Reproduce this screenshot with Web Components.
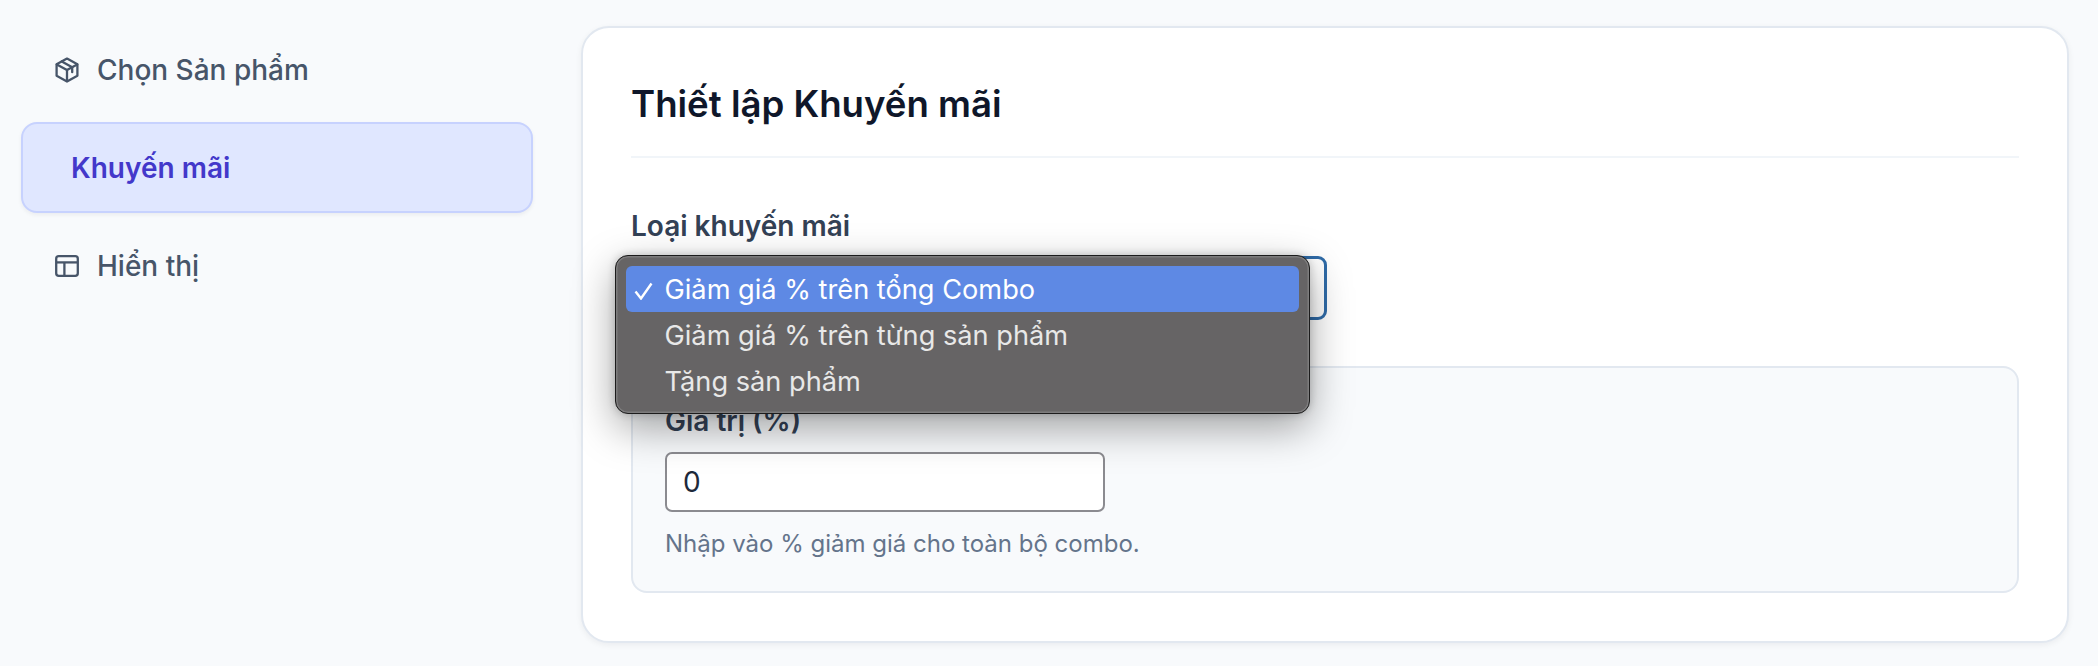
<!DOCTYPE html>
<html lang="vi">
<head>
<meta charset="utf-8">
<title>Thiết lập Khuyến mãi</title>
<style>
  html, body { margin: 0; height: 100%; overflow: hidden; background: #f8fafc; font-family: Inter, "Noto Sans", sans-serif; }
</style>
</head>
<body>
<combo-editor>
  <side-nav slot="nav">
    <nav-item icon="package">Chọn Sản phẩm</nav-item>
    <nav-item active>Khuyến mãi</nav-item>
    <nav-item icon="layout">Hiển thị</nav-item>
  </side-nav>
  <promo-card heading="Thiết lập Khuyến mãi">
    <promo-type label="Loại khuyến mãi"></promo-type>
    <value-panel label="Giá trị (%)" value="0" hint="Nhập vào % giảm giá cho toàn bộ combo."></value-panel>
  </promo-card>
</combo-editor>

<script>
class ComboEditor extends HTMLElement {
    constructor() {
        super();
        this.attachShadow({ mode: 'open' });
        this.shadowRoot.innerHTML = `
            <style>
                :host {
                    display: grid;
                    grid-template-columns: 512px 1488px;
                    column-gap: 48px;
                    padding: 0 29px 0 21px;
                    align-items: start;
                }
            </style>
            <slot name="nav"></slot>
            <slot></slot>
        `;
    }
}

class SideNav extends HTMLElement {
    constructor() {
        super();
        this.attachShadow({ mode: 'open' });
        this.shadowRoot.innerHTML = `
            <style>
                :host {
                    display: flex;
                    flex-direction: column;
                    gap: 7px;
                    padding-top: 24px;
                }
            </style>
            <slot></slot>
        `;
    }
}

const NAV_ICONS = {
    package: `<svg width="24" height="26" viewBox="0 0 24 26" fill="none" stroke="currentColor" stroke-width="2.3" stroke-linejoin="round" stroke-linecap="round">
        <path d="M12 1.6 22.4 7.3v11.4L12 24.4 1.6 18.7V7.3Z"/>
        <path d="M1.8 7.4 12 13l10.2-5.6"/>
        <path d="M12 13v11.2"/>
        <path d="M6.8 4.4 17.2 10.2v5"/>
    </svg>`,
    layout: `<svg width="24" height="22" viewBox="0 0 24 22" fill="none" stroke="currentColor" stroke-width="2.3" stroke-linejoin="round">
        <rect x="1.2" y="1.2" width="21.6" height="19.6" rx="2.6"/>
        <path d="M1.2 7.4h21.6"/>
        <path d="M9.4 7.4v13.4"/>
    </svg>`
};

class NavItem extends HTMLElement {
    constructor() {
        super();
        this.attachShadow({ mode: 'open' });
    }

    connectedCallback() {
        const icon = NAV_ICONS[this.getAttribute('icon')] || '';
        this.shadowRoot.innerHTML = `
            <style>
                :host {
                    display: flex;
                    align-items: center;
                    gap: 18px;
                    box-sizing: border-box;
                    height: 91px;
                    padding: 0 32px;
                    border: 2px solid transparent;
                    border-radius: 16px;
                    color: #475569;
                    font-size: 28px;
                    font-weight: 500;
                }
                :host([active]) {
                    padding-left: 48px;
                    background: #e0e7ff;
                    border-color: #c7d2fe;
                    color: #4338ca;
                    font-weight: 600;
                    box-shadow: 0 2px 4px rgba(15, 23, 42, 0.06);
                }
                svg { display: block; flex: none; }
            </style>
            ${icon}
            <slot></slot>
        `;
    }
}

class PromoCard extends HTMLElement {
    constructor() {
        super();
        this.attachShadow({ mode: 'open' });
    }

    connectedCallback() {
        this.shadowRoot.innerHTML = `
            <style>
                :host {
                    display: block;
                    box-sizing: border-box;
                    height: 617px;
                    margin-top: 26px;
                    padding: 55px 48px 0;
                    background: #fff;
                    border: 2px solid #e2e8f0;
                    border-radius: 28px;
                    box-shadow: 0 2px 6px rgba(15, 23, 42, 0.06);
                }
                h2 {
                    margin: 0;
                    padding-bottom: 31px;
                    border-bottom: 2px solid #f1f5f9;
                    color: #0f172a;
                    font-size: 36.6px;
                    line-height: 42px;
                    font-weight: 600;
                }
            </style>
            <h2>${this.getAttribute('heading')}</h2>
            <slot></slot>
        `;
    }
}

class PromoType extends HTMLElement {
    constructor() {
        super();
        this.attachShadow({ mode: 'open' });
    }

    connectedCallback() {
        this.shadowRoot.innerHTML = `
            <style>
                :host { display: block; margin-top: 51px; }
                label {
                    display: block;
                    margin-bottom: 13px;
                    color: #334155;
                    font-size: 28px;
                    line-height: 34px;
                    font-weight: 600;
                }
                .select {
                    position: relative;
                    box-sizing: border-box;
                    width: 696px;
                    height: 64px;
                    background: #fff;
                    border: 3.5px solid #2f6ba8;
                    border-radius: 9px;
                }
                option-menu {
                    position: absolute;
                    left: -19.5px;
                    top: -4.5px;
                }
            </style>
            <label>${this.getAttribute('label')}</label>
            <div class="select">
                <option-menu>
                    <menu-option selected>Giảm giá % trên tổng Combo</menu-option>
                    <menu-option>Giảm giá % trên từng sản phẩm</menu-option>
                    <menu-option>Tặng sản phẩm</menu-option>
                </option-menu>
            </div>
        `;
    }
}

class OptionMenu extends HTMLElement {
    constructor() {
        super();
        this.attachShadow({ mode: 'open' });
        this.shadowRoot.innerHTML = `
            <style>
                :host {
                    display: block;
                    box-sizing: border-box;
                    width: 695px;
                    height: 159px;
                    padding: 10px;
                    background: #666465;
                    border: 1px solid #1c1c1c;
                    border-radius: 13px;
                    box-shadow: inset 0 0 0 1.5px #7d7c7d, 0 14px 42px rgba(0, 0, 0, 0.36), 0 0 8px rgba(0, 0, 0, 0.2);
                }
            </style>
            <slot></slot>
        `;
    }
}

class MenuOption extends HTMLElement {
    constructor() {
        super();
        this.attachShadow({ mode: 'open' });
    }

    connectedCallback() {
        const tick = this.hasAttribute('selected')
            ? `<svg class="tick" width="20" height="18" viewBox="0 0 20 18" fill="none" stroke="currentColor" stroke-width="2.4"><path d="M1.5 9.5 7 16.5 17.5 1.5"/></svg>`
            : '';
        this.shadowRoot.innerHTML = `
            <style>
                :host {
                    display: flex;
                    align-items: center;
                    position: relative;
                    box-sizing: border-box;
                    height: 46px;
                    padding: 2px 0 0 39px;
                    border-radius: 6px;
                    color: #e8e8e8;
                    font-size: 27.2px;
                    font-weight: 400;
                    white-space: nowrap;
                }
                :host([selected]) {
                    background: #5e89e4;
                    color: #fff;
                }
                .tick { position: absolute; left: 8px; top: 16px; }
            </style>
            ${tick}
            <slot></slot>
        `;
    }
}

class ValuePanel extends HTMLElement {
    constructor() {
        super();
        this.attachShadow({ mode: 'open' });
    }

    connectedCallback() {
        this.shadowRoot.innerHTML = `
            <style>
                :host {
                    display: block;
                    box-sizing: border-box;
                    height: 227px;
                    margin-top: 46px;
                    padding: 36px 32px 0;
                    background: #f8fafc;
                    border: 2px solid #e2e8f0;
                    border-radius: 16px;
                }
                label {
                    display: block;
                    margin-bottom: 14px;
                    color: #334155;
                    font-size: 28px;
                    line-height: 34px;
                    font-weight: 600;
                }
                input {
                    display: block;
                    box-sizing: border-box;
                    width: 440px;
                    height: 60px;
                    padding: 0 16px;
                    background: #fff;
                    border: 2px solid #8b8b90;
                    border-radius: 7px;
                    color: #1e293b;
                    font: 400 28px Inter, sans-serif;
                    outline: none;
                }
                p {
                    margin: 17px 0 0;
                    color: #64748b;
                    font-size: 24px;
                    line-height: 30px;
                }
            </style>
            <label>${this.getAttribute('label')}</label>
            <input type="text" value="${this.getAttribute('value')}">
            <p>${this.getAttribute('hint')}</p>
        `;
    }
}

customElements.define('combo-editor', ComboEditor);
customElements.define('side-nav', SideNav);
customElements.define('nav-item', NavItem);
customElements.define('promo-card', PromoCard);
customElements.define('promo-type', PromoType);
customElements.define('option-menu', OptionMenu);
customElements.define('menu-option', MenuOption);
customElements.define('value-panel', ValuePanel);
</script>
</body>
</html>
